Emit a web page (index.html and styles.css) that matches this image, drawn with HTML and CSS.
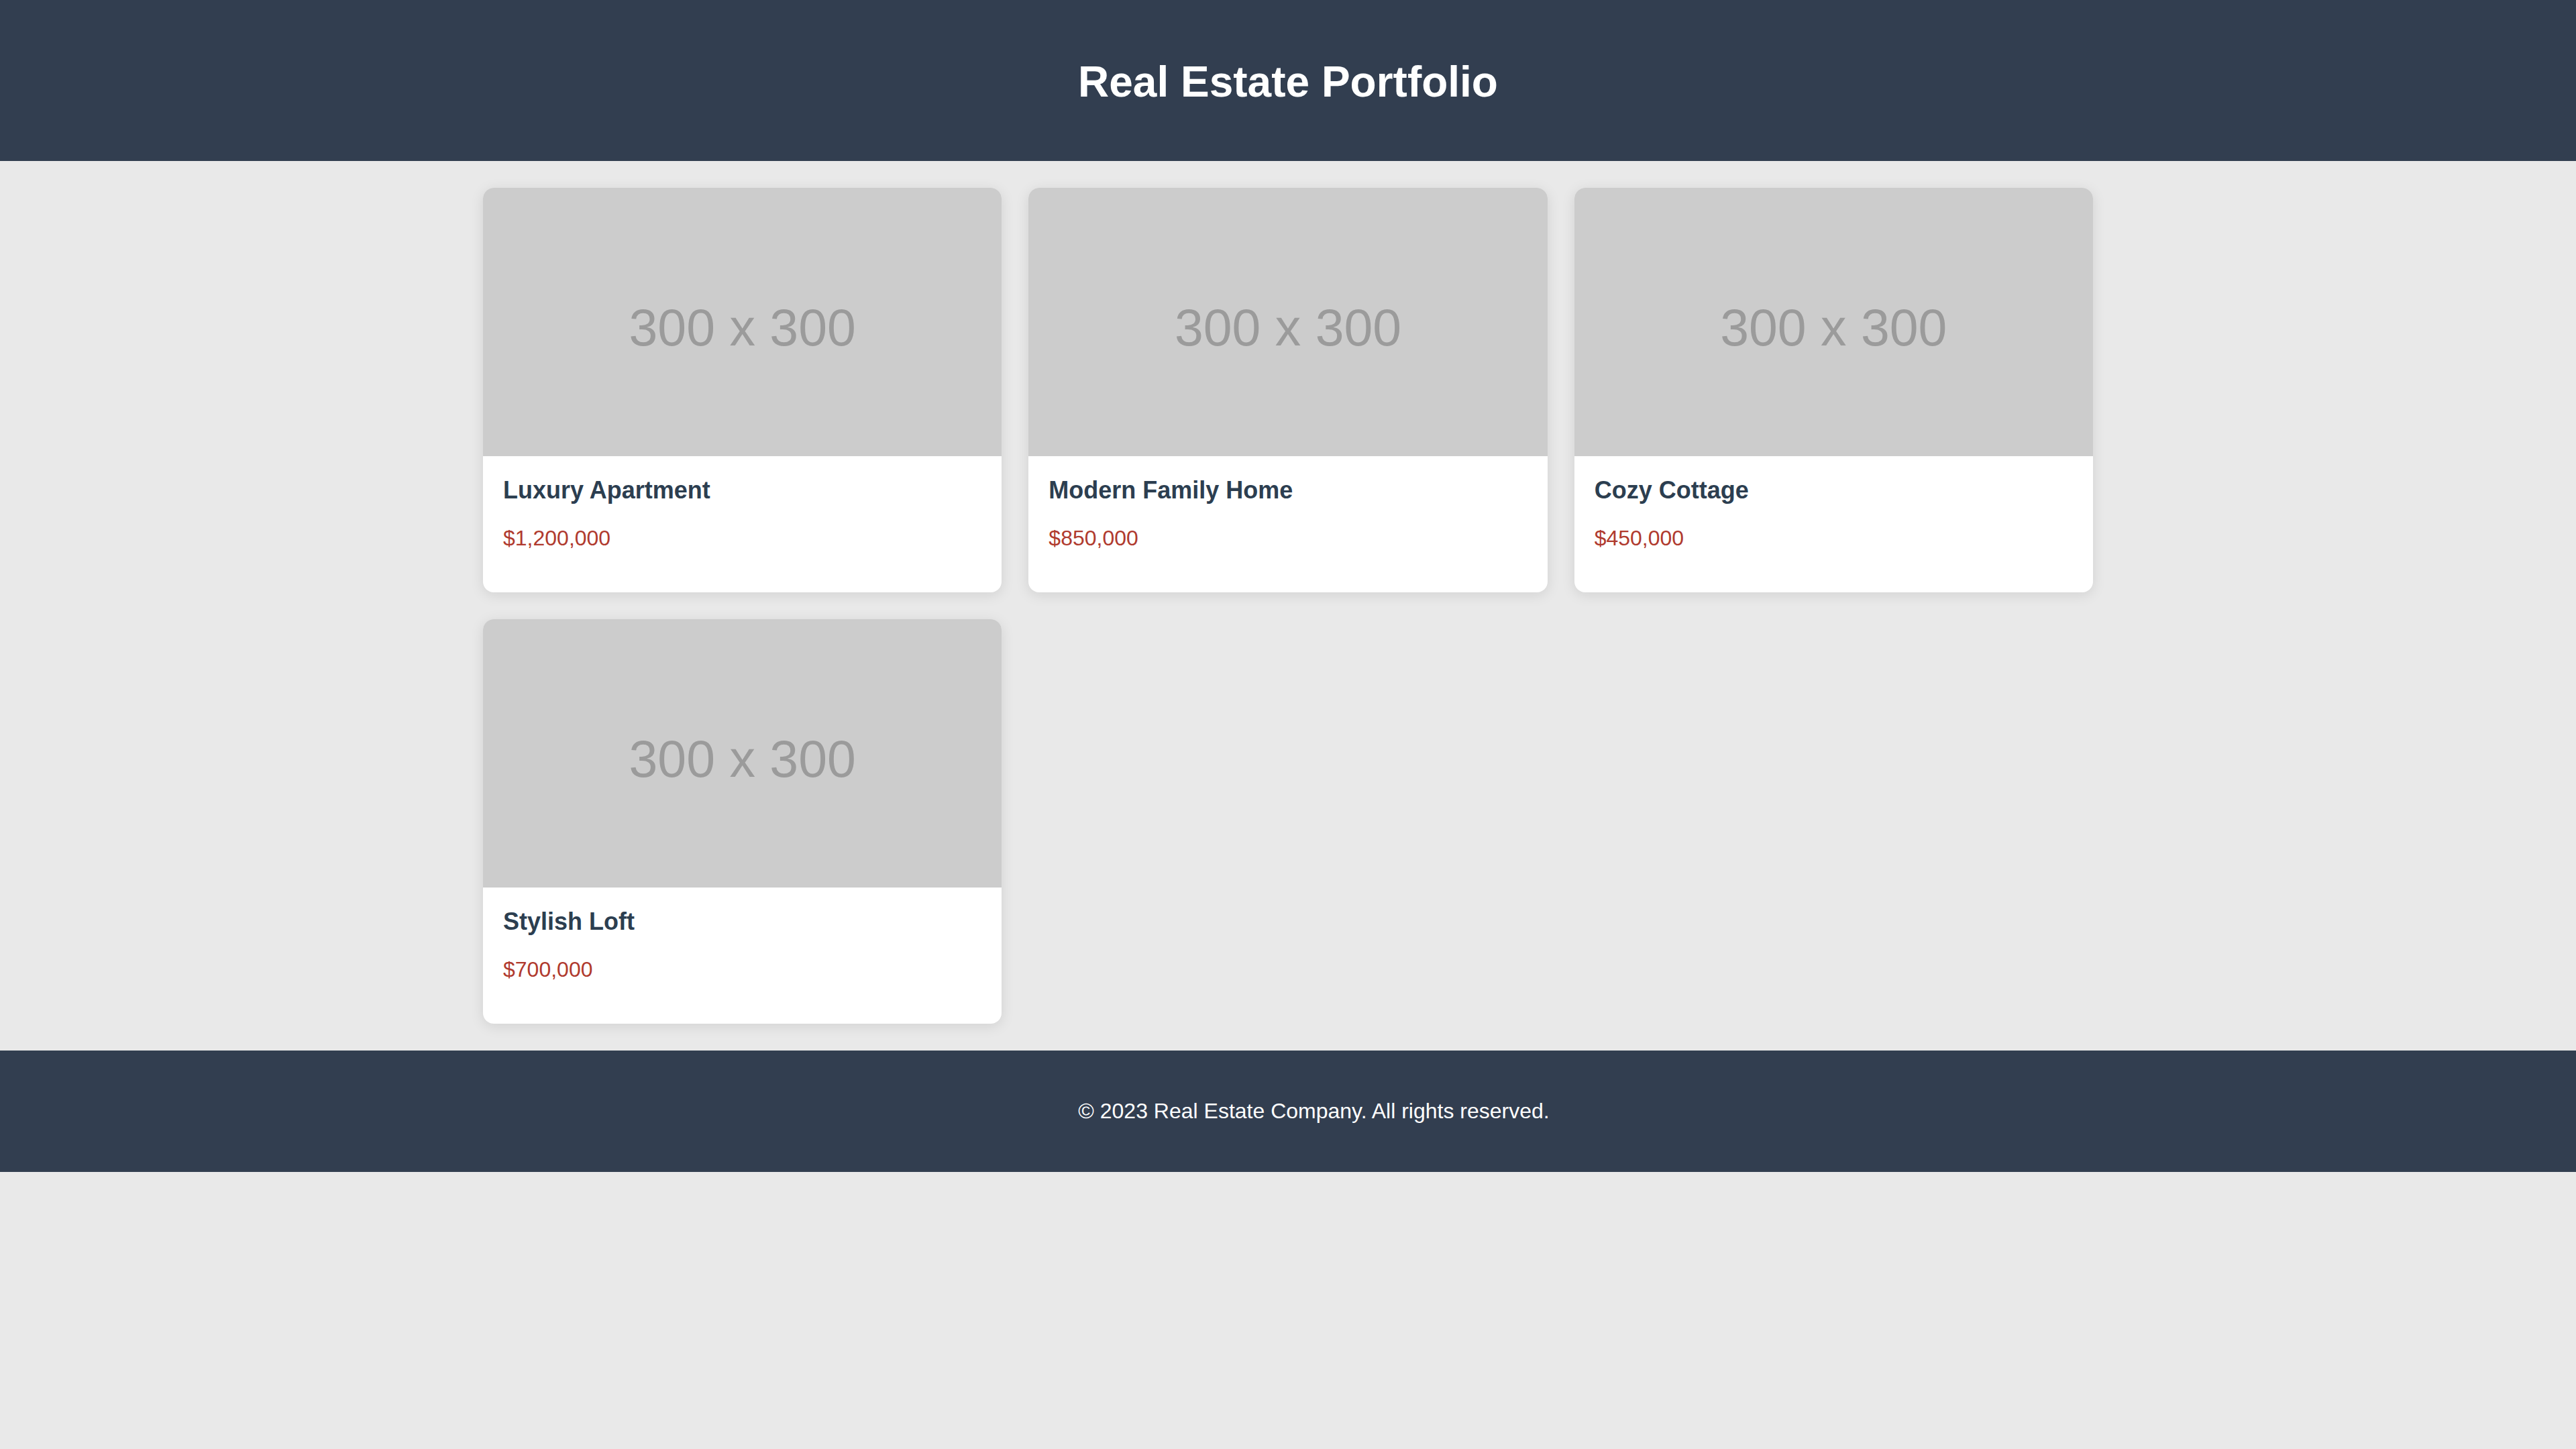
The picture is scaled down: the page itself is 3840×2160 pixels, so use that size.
FILE: index.html
```html
<!DOCTYPE html>
<html lang="en">
<head>
<meta charset="utf-8">
<title>Real Estate Portfolio</title>
<link rel="stylesheet" href="styles.css">
</head>
<body>
<header class="site-header">
  <h1 class="site-title">Real Estate Portfolio</h1>
</header>
<main class="portfolio">
  <div class="card">
    <div class="card-image"><span>300 x 300</span></div>
    <div class="card-body">
      <h3 class="card-title">Luxury Apartment</h3>
      <p class="card-price">$1,200,000</p>
    </div>
  </div>
  <div class="card">
    <div class="card-image"><span>300 x 300</span></div>
    <div class="card-body">
      <h3 class="card-title">Modern Family Home</h3>
      <p class="card-price">$850,000</p>
    </div>
  </div>
  <div class="card">
    <div class="card-image"><span>300 x 300</span></div>
    <div class="card-body">
      <h3 class="card-title">Cozy Cottage</h3>
      <p class="card-price">$450,000</p>
    </div>
  </div>
  <div class="card">
    <div class="card-image"><span>300 x 300</span></div>
    <div class="card-body">
      <h3 class="card-title">Stylish Loft</h3>
      <p class="card-price">$700,000</p>
    </div>
  </div>
</main>
<footer class="site-footer">
  <p class="footer-text">&copy; 2023 Real Estate Company. All rights reserved.</p>
</footer>
</body>
</html>
```
FILE: styles.css
```css
html, body {
  margin: 0;
  padding: 0;
}
body {
  background: #e9e9e9;
  font-family: "Liberation Sans", Arial, sans-serif;
  font-size: 32px;
}
.site-header {
  background: #323e50;
  color: #ffffff;
  padding: 40px;
  text-align: center;
}
.site-title {
  font-size: 64px;
  font-weight: bold;
  margin: 45px 0 41px;
}
.portfolio {
  max-width: 2400px;
  margin: 0 auto;
  padding: 40px 0;
  display: grid;
  grid-template-columns: repeat(3, 1fr);
  gap: 40px;
}
.card {
  background: #ffffff;
  border-radius: 16px;
  overflow: hidden;
  box-shadow: 0 4px 20px rgba(0, 0, 0, 0.1);
}
.card-image {
  height: 400px;
  background: #cccccc;
  color: #9b9b9b;
  display: flex;
  align-items: center;
  justify-content: center;
  font-size: 77px;
  padding-top: 17px;
  box-sizing: border-box;
}
.card-body {
  padding: 30px 30px 30px;
}
.card-title {
  margin: 0 0 20px;
  font-size: 36px;
  color: #2c3e50;
}
.card-price {
  margin: 32px 0;
  color: #b03a2e;
  font-size: 32px;
}
.site-footer {
  background: #323e50;
  color: #ffffff;
  padding: 40px 0 40px 77px;
  text-align: center;
}
.footer-text {
  margin: 32px 0;
}
```
